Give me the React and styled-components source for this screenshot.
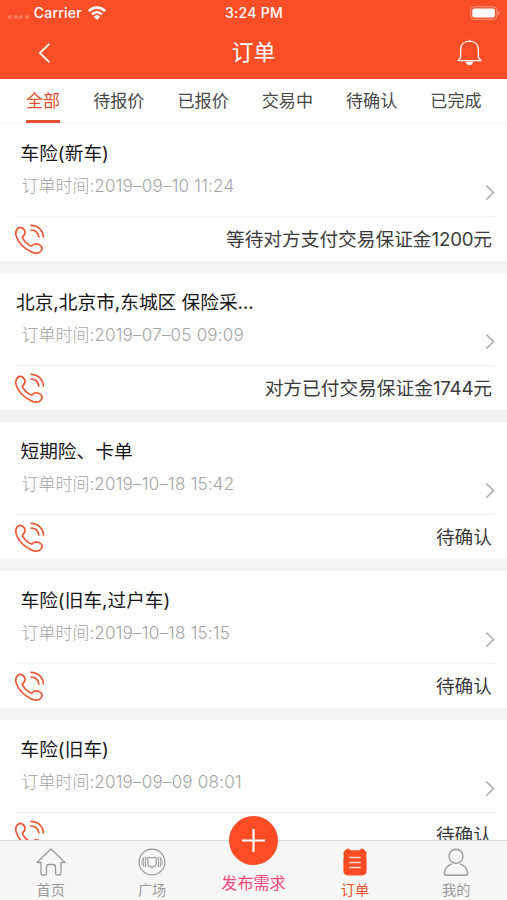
import React from "react";
import styled, { createGlobalStyle } from "styled-components";

const GlobalStyle = createGlobalStyle`
  * { box-sizing: border-box; }
  body { margin: 0; background: #fff; }
`;

const Screen = styled.div`
  width: 507px;
  height: 900px;
  display: flex;
  flex-direction: column;
  overflow: hidden;
  background: #fff;
  font-family: Inter, "Noto Sans CJK SC", sans-serif;
  white-space: nowrap;
`;

const Header = styled.header`
  height: 79px;
  flex: none;
  background: #fa4e28;
  color: #fff;
`;

const StatusBar = styled.div`
  height: 26px;
  padding: 0 7px 0 8px;
  display: grid;
  grid-template-columns: 1fr auto 1fr;
  align-items: center;
  font-size: 14px;
  line-height: 26px;
  font-weight: 500;
`;

const Carrier = styled.div`
  display: flex;
  align-items: center;
  gap: 5px;
  letter-spacing: 0.2px;
`;

const Signal = styled.div`
  display: flex;
  gap: 1.6px;
  padding-top: 8px;
`;

const Dot = styled.i`
  width: 4px;
  height: 4px;
  border-radius: 50%;
  background: rgba(255, 255, 255, 0.25);
`;

const Clock = styled.div`
  letter-spacing: 0.3px;
`;

const Battery = styled.div`
  display: flex;
  justify-content: flex-end;
`;

const NavBar = styled.div`
  height: 53px;
  padding: 0 25px 0 37px;
  display: grid;
  grid-template-columns: 1fr auto 1fr;
  align-items: center;
`;

const Heading = styled.h1`
  margin: 0 0 0 -12px;
  font-size: 22px;
  line-height: 51px;
  font-weight: 400;
`;

const NavRight = styled.div`
  display: flex;
  justify-content: flex-end;
`;

const Tabs = styled.nav`
  height: 45px;
  flex: none;
  display: flex;
  gap: 33px;
  padding-left: 26px;
  border-bottom: 2px solid #fafafa;
`;

const Tab = styled.div`
  height: 44px;
  font-size: 17.1px;
  line-height: 44px;
  color: ${(p) => (p.$active ? "#e8502f" : "#484848")};
  box-shadow: inset 0 -3px ${(p) => (p.$active ? "#e45235" : "transparent")};
`;

const List = styled.main`
  flex: 1;
  min-height: 0;
  overflow: hidden;
`;

const Card = styled.article`
  height: 149px;
  border-bottom: 12px solid #f3f3f3;
`;

const Summary = styled.div`
  height: 93px;
  margin: 0 12px 0 15px;
  padding-top: 15px;
  position: relative;
  border-bottom: 1px solid #f2f2f2;
`;

const Title = styled.h2`
  margin: 0;
  padding-left: ${(p) => (p.$wide ? "1px" : "5.5px")};
  font-size: 18.7px;
  line-height: 30px;
  font-weight: 400;
  color: #161616;
`;

const Time = styled.div`
  padding-left: 6.5px;
  font-size: 17px;
  line-height: 35px;
  font-weight: 300;
  color: #a3a3a3;
`;

const Digits = styled.span`
  letter-spacing: 0.22px;
`;

const Arrow = styled.div`
  position: absolute;
  right: 0;
  top: 60px;
  line-height: 0;
`;

const Footer = styled.div`
  height: 44px;
  padding: 0 15px 0 14px;
  display: flex;
  align-items: center;
  justify-content: space-between;
`;

const Status = styled.span`
  padding-top: 2px;
  font-size: 18.7px;
  line-height: 44px;
  color: #3a3a3a;
`;

const Amount = styled.span`
  letter-spacing: -0.2px;
`;

const TabBar = styled.footer`
  height: 60px;
  flex: none;
  display: grid;
  grid-template-columns: repeat(5, 1fr);
  background: #f6f6f6;
  border-top: 1px solid #d9d9d9;
`;

const NavItem = styled.div`
  height: 59px;
  padding-top: 6px;
  display: flex;
  flex-direction: column;
  align-items: center;
  color: ${(p) => (p.$active ? "#ee4f2d" : "#9a9a9a")};
`;

const NavLabel = styled.span`
  margin-top: 3px;
  font-size: 14.2px;
  line-height: 20px;
`;

const Publish = styled.div`
  display: flex;
  flex-direction: column;
  align-items: center;
  margin-top: -25px;
  position: relative;
`;

const PublishButton = styled.div`
  width: 49px;
  height: 49px;
  flex: none;
  border-radius: 50%;
  display: flex;
  align-items: center;
  justify-content: center;
  background: #fb4c25;
`;

const PublishLabel = styled.span`
  margin-top: 8px;
  font-size: 16.1px;
  line-height: 20px;
  color: #f4467a;
`;

const WifiIcon = () => (
  <svg width="20" height="16" viewBox="0 0 20 16" fill="none" stroke="#fff" strokeWidth="2.7">
    <path d="M1.8 6.1C6.3 1.4 13.7 1.4 18.2 6.1" />
    <path d="M5 9.4C7.8 6.5 12.2 6.5 15 9.4" />
    <path d="M10 15 6.8 11.7C8.5 9.9 11.5 9.9 13.2 11.7Z" fill="#fff" stroke="none" />
  </svg>
);

const BatteryIcon = () => (
  <svg width="30" height="14" viewBox="0 0 30 14">
    <rect x=".7" y=".7" width="26.2" height="12.6" rx="3.5" fill="none" stroke="#fff" strokeOpacity=".4" />
    <rect x="2.3" y="2.5" width="22.6" height="9" rx="2" fill="#fff" />
    <path d="M28.2 5c1.6.8 1.6 3.2 0 4z" fill="#fff" fillOpacity=".5" />
  </svg>
);

const BackIcon = () => (
  <svg width="14" height="20" viewBox="0 0 14 20" fill="none" stroke="#fff" strokeWidth="1.8">
    <path d="M12.3.8 2.8 10l9.5 9.2" />
  </svg>
);

const BellIcon = () => (
  <svg width="25" height="28" viewBox="0 0 25 28" fill="none" stroke="#fff" strokeWidth="1.3" strokeLinejoin="round">
    <path d="M12.5.8v1.5M3.6 18.5V11C3.6 5.5 7.2 2.2 12.5 2.2s8.900 3.300 8.900 8.800v7.500L24 21.600H1z" />
    <path d="M8.800 22.800h7.400c-.6 4.500-6.800 4.500-7.400 0z" fill="#fff" stroke="none" />
  </svg>
);

const ArrowIcon = () => (
  <svg width="10" height="17" viewBox="0 0 10 17" fill="none" stroke="#a9a9a9" strokeWidth="1.5">
    <path d="M1.3 1.5 8.5 8.5 1.3 15.7" />
  </svg>
);

const PhoneIcon = () => (
  <svg width="31" height="31" viewBox="0 0 31 31" fill="none" stroke="#ee5735" strokeWidth="1.7" strokeLinecap="round" strokeLinejoin="round">
    <path d="M3.800 4.500C6 2.500 9 3.500 10.300 6C11.800 8.800 11.200 10.300 9.300 12C8.300 12.900 8.200 13.600 8.800 14.700C10.400 17.500 13 19.800 15.600 21.400C16.900 22.200 17.600 22.200 18.500 21.500C20.500 19.600 22.200 19.300 25 20.500C28.300 21.900 29 24.500 27 27C24.600 29.700 20.500 29.500 17 27.700C10.700 24.700 5 19.300 2.600 13.300C1.200 9.600 1.400 6.500 3.800 4.500Z" />
    <path d="M17.100 1.300C23.800 1.300 29.200 6.500 29.400 13M16.900 6C21.300 6.200 24.300 9 24.800 13" />
  </svg>
);

const HomeIcon = () => (
  <svg width="30" height="30" viewBox="0 0 30 30" fill="none" stroke="currentColor" strokeWidth="1.3" strokeLinejoin="round">
    <path d="M15 2 29 15.500H25V26Q25 28 23 28H21Q19.500 28 19.500 26.500V20Q19.500 17.500 17 17.500H13Q10.500 17.500 10.500 20V26.500Q10.500 28 9 28H7Q5 28 5 26V15.500H1Z" />
  </svg>
);

const PlazaIcon = () => (
  <svg width="30" height="30" viewBox="0 0 30 30" fill="none" stroke="currentColor" strokeWidth="1.2">
    <circle cx="15" cy="15" r="12.9" />
    <path d="M10.800 10.800Q12 9.800 15 10.800Q18 9.800 19.200 10.800V17.500Q19.200 19.200 17.500 19.200H16.700L15 20.700 13.300 19.200H12.500Q10.800 19.200 10.800 17.500Z" />
    <path d="M8.800 10Q7.500 15 8.800 20M7 9.700Q5.200 15 7 20.300M21.200 10Q22.500 15 21.200 20M23 9.700Q24.800 15 23 20.300" strokeWidth="1" />
    <path d="M5.300 11.500Q4.100 15 5.300 18.500M24.700 11.500Q25.900 15 24.700 18.500" strokeWidth=".7" />
  </svg>
);

const OrderIcon = () => (
  <svg width="30" height="30" viewBox="0 0 30 30">
    <path d="M7.500 1.800H9.300Q10 3.300 11.500 3.300H18.500Q20 3.300 20.700 1.800H22.500Q24.300 1.900 25 3.700Q26.800 4.200 26.600 6.500L26.200 9.300L26.600 12V24Q26.500 28.400 22 28.400H8Q3.500 28.400 3.400 24V12L3.800 9.300L3.400 6.500Q3.200 4.200 5 3.700Q5.700 1.900 7.500 1.800Z" fill="#fb4c25" />
    <path d="M9.200 10.500h11.600M9.200 15.500h11.600M9.200 20.500h11.600" stroke="#ffd8ce" strokeWidth="1.4" />
  </svg>
);

const UserIcon = () => (
  <svg width="30" height="30" viewBox="0 0 30 30" fill="none" stroke="currentColor" strokeWidth="1.4">
    <circle cx="15" cy="9.2" r="7" />
    <path d="M10.800 16.800C6.300 18.500 3.700 21.500 3.400 26Q3.400 28.200 5.600 28.200H24.400Q26.600 28.200 26.600 26C26.300 21.500 23.700 18.500 19.200 16.800" />
  </svg>
);

const PlusIcon = () => (
  <svg width="25" height="25" viewBox="0 0 25 25" stroke="#fff" strokeWidth="2.2">
    <path d="M12.5 1v23M1 12.500h23" />
  </svg>
);

const tabs = ["全部", "待报价", "已报价", "交易中", "待确认", "已完成"];

const orders = [
  { title: "车险(新车)", time: "2019–09–10 11:24", status: "等待对方支付交易保证金", amount: "1200" },
  { title: "北京,北京市,东城区 保险采…", time: "2019–07–05 09:09", status: "对方已付交易保证金", amount: "1744", wide: true },
  { title: "短期险、卡单", time: "2019–10–18 15:42", status: "待确认" },
  { title: "车险(旧车,过户车)", time: "2019–10–18 15:15", status: "待确认" },
  { title: "车险(旧车)", time: "2019–09–09 08:01", status: "待确认" },
];

const OrderCard = ({ title, time, status, amount, wide }) => (
  <Card>
    <Summary>
      <Title $wide={wide}>{title}</Title>
      <Time>
        订单时间:<Digits>{time}</Digits>
      </Time>
      <Arrow><ArrowIcon /></Arrow>
    </Summary>
    <Footer>
      <PhoneIcon />
      <Status>
        {status}
        {amount && <><Amount>{amount}</Amount>元</>}
      </Status>
    </Footer>
  </Card>
);

export default function App() {
  return (
    <Screen>
      <GlobalStyle />
      <Header>
        <StatusBar>
          <Carrier>
            <Signal><Dot /><Dot /><Dot /><Dot /></Signal>
            <span>Carrier</span>
            <WifiIcon />
          </Carrier>
          <Clock>3:24 PM</Clock>
          <Battery><BatteryIcon /></Battery>
        </StatusBar>
        <NavBar>
          <BackIcon />
          <Heading>订单</Heading>
          <NavRight><BellIcon /></NavRight>
        </NavBar>
      </Header>
      <Tabs>
        {tabs.map((name, i) => <Tab key={name} $active={i === 0}>{name}</Tab>)}
      </Tabs>
      <List>
        {orders.map((order) => <OrderCard key={order.title} {...order} />)}
      </List>
      <TabBar>
        <NavItem><HomeIcon /><NavLabel>首页</NavLabel></NavItem>
        <NavItem><PlazaIcon /><NavLabel>广场</NavLabel></NavItem>
        <Publish>
          <PublishButton><PlusIcon /></PublishButton>
          <PublishLabel>发布需求</PublishLabel>
        </Publish>
        <NavItem $active><OrderIcon /><NavLabel>订单</NavLabel></NavItem>
        <NavItem><UserIcon /><NavLabel>我的</NavLabel></NavItem>
      </TabBar>
    </Screen>
  );
}
